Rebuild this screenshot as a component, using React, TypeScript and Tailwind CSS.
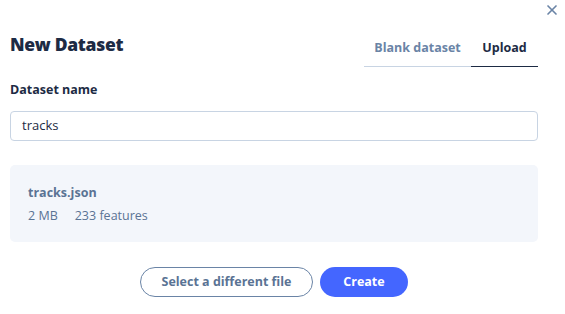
import { X } from "lucide-react"

const font = { fontFamily: '"Open Sans", "Liberation Sans", sans-serif' }

export default function App() {
    return (
        <div className="w-[565px] h-[314px] bg-white relative text-[#1d2b44]" style={font}>
            <button className="absolute right-[5px] top-[2px] text-[#6a84a6]">
                <X size={16} strokeWidth={2.5} />
            </button>
            <div className="pl-[10px] pr-[27px] pt-[30px]">
                <div className="flex justify-between items-end">
                    <h1 className="text-[17.5px] font-extrabold leading-[24px] mb-[11px] tracking-[-0.3px]">New Dataset</h1>
                    <div className="flex">
                        <div className="w-[107px] h-[37px] flex items-center justify-center border-b-[1.5px] border-[#c8d4e3] text-[12.5px] font-bold text-[#6a84a6]">
                            Blank dataset
                        </div>
                        <div className="w-[67px] h-[37px] flex items-center justify-center border-b-[1.5px] border-[#1d2b44] text-[12.5px] font-bold">
                            Upload
                        </div>
                    </div>
                </div>
                <label className="block mt-[14px] text-[12.5px] font-bold leading-[18px]">Dataset name</label>
                <div className="mt-[12px] h-[30px] border border-[#c8d4e3] rounded-[4px] flex items-center px-[11px] text-[13px] text-[#1d2b44]">
                    tracks
                </div>
                <div className="mt-[24px] h-[77px] bg-[#f3f6fb] rounded-[5px] px-[18px] pt-[19px]">
                    <div className="text-[12.5px] font-bold text-[#5a7394] leading-[17px]">tracks.json</div>
                    <div className="mt-[6px] flex gap-[17px] text-[12.5px] text-[#5a7394] leading-[17px]">
                        <span>2 MB</span>
                        <span>233 features</span>
                    </div>
                </div>
                <div className="mt-[25px] flex justify-center gap-[7px]">
                    <button className="w-[173px] h-[30px] rounded-full border border-[#6a84a6] text-[12.5px] font-bold text-[#5a7394]">
                        Select a different file
                    </button>
                    <button className="w-[88px] h-[30px] rounded-full bg-[#4466ff] text-white text-[12.5px] font-bold">
                        Create
                    </button>
                </div>
            </div>
        </div>
    )
}
